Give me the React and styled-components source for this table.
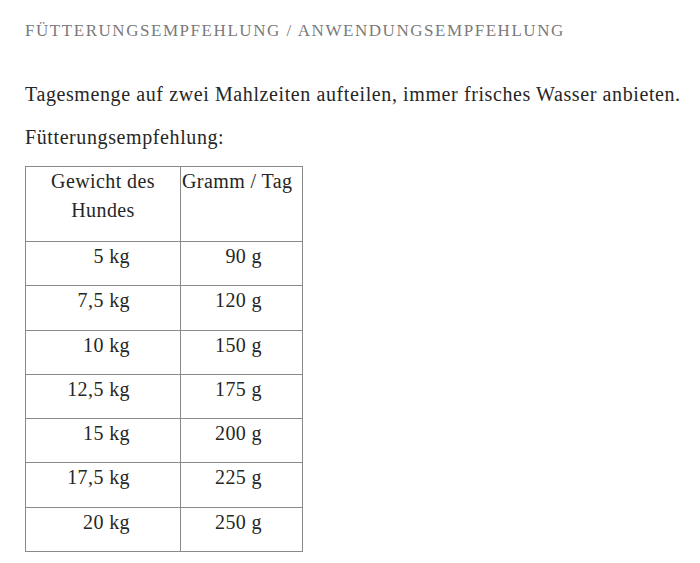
import React from 'react';
import styled, {createGlobalStyle} from "styled-components";

const GlobalStyle = createGlobalStyle`
    html, body {
        margin: 0;
        padding: 0;
        background: #fff;
    }
    body {
        font-family: "Liberation Serif", "DejaVu Serif", serif;
        color: #262626;
    }`

const Page = styled.div`
    padding: 20px 0 0 25px;
    width: 675px;
    height: 543px;
    overflow: hidden;`

const Heading = styled.h2`
    margin: 0 0 37px;
    font-size: 17px;
    font-weight: normal;
    letter-spacing: 1.55px;
    color: #7a7a7a;
    text-transform: uppercase;
    line-height: 22px;`

const Text = styled.p`
    margin: 0 0 13px;
    font-size: 20px;
    letter-spacing: 0.6px;
    line-height: 30px;
    white-space: nowrap;`

const Table = styled.table`
    border-collapse: collapse;
    margin-top: 14px;
    font-size: 20px;
    letter-spacing: 0.4px;
    line-height: 29px;
    > tbody > tr > td {
        border: 1px solid #8a8a8a;
        vertical-align: top;
        padding: 0 3px 10px;
    }`

const Cell = styled.td`
    width: ${p => p.w}px;
    height: ${p => p.h}px;
    box-sizing: border-box;
    text-align: ${p => p.align || 'center'};
    padding-left: ${p => p.pl || 3}px !important;
    padding-right: ${p => p.pr || 3}px !important;
    white-space: ${p => p.nowrap ? 'nowrap' : 'normal'};`

const rows = [
    ['5 kg', '90 g'],
    ['7,5 kg', '120 g'],
    ['10 kg', '150 g'],
    ['12,5 kg', '175 g'],
    ['15 kg', '200 g'],
    ['17,5 kg', '225 g'],
    ['20 kg', '250 g'],
]

export default function App() {
    return (
        <Page>
            <GlobalStyle/>
            <Heading>Fütterungsempfehlung / Anwendungsempfehlung</Heading>
            <Text>Tagesmenge auf zwei Mahlzeiten aufteilen, immer frisches Wasser anbieten.</Text>
            <Text>Fütterungsempfehlung:</Text>
            <Table>
                <tbody>
                <tr>
                    <Cell w={155} h={75}>Gewicht des Hundes</Cell>
                    <Cell w={122} h={75} nowrap align={'left'} pl={1} pr={0}>Gramm / Tag</Cell>
                </tr>
                {rows.map(r => (
                    <tr key={r[0]}>
                        <Cell w={155} h={44.3} align={'right'} pr={50}>{r[0]}</Cell>
                        <Cell w={122} h={44.3} align={'right'} pr={40}>{r[1]}</Cell>
                    </tr>
                ))}
                </tbody>
            </Table>
        </Page>
    );
};
